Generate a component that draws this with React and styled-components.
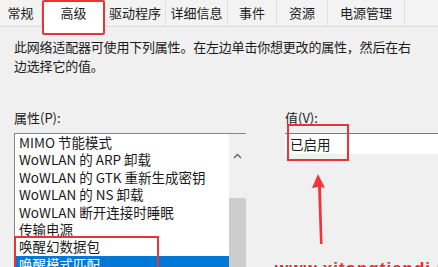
import React from 'react'
import styled, { createGlobalStyle } from 'styled-components'

const Global = createGlobalStyle`
  body {
    margin: 0;
    background: #f0f0f0;
  }
`

const Page = styled.div`
  position: relative;
  width: 438px;
  height: 267px;
  overflow: hidden;
  background: #f0f0f0;
  font-family: "Noto Sans CJK SC", "Noto Sans", sans-serif;
  color: #1a1a1a;
`

const TabBar = styled.div`
  display: flex;
  height: 26px;
  border-bottom: 1px solid #d9d9d9;
  background: #f3f3f3;
`

const Tab = styled.div`
  box-sizing: border-box;
  width: ${p => p.$w}px;
  flex: none;
  display: flex;
  justify-content: center;
  align-items: flex-start;
  padding-top: 4px;
  font-size: 13px;
  line-height: 18px;
  border-right: 1px solid #e2e2e2;
  ${p => p.$active && `
    height: 35px;
    background: #fff;
    border: 2px solid #e8333a;
    border-radius: 2px;
    padding-top: 2px;
    position: relative;
    z-index: 2;
  `}
`

const Intro = styled.p`
  margin: 10px 14px 0;
  width: 402px;
  font-size: 13px;
  line-height: 19px;
  letter-spacing: -0.2px;
`

const Columns = styled.div`
  display: flex;
  margin-top: 33px;
  padding-left: 14px;
`

const LeftCol = styled.div`
  width: 232px;
  flex: none;
`

const RightCol = styled.div`
  position: relative;
  margin-left: 39px;
  flex: 1;
`

const Label = styled.div`
  font-size: 13px;
  line-height: 19px;
  margin-bottom: 6px;
`

const ListBox = styled.div`
  display: flex;
  height: 160px;
  border-top: 1px solid #828790;
  border-left: 1px solid #828790;
  background: #fff;
`

const Items = styled.div`
  flex: 1;
`

const Item = styled.div`
  height: 17.4px;
  line-height: 17.4px;
  padding-left: 4px;
  font-size: 13.5px;
  white-space: nowrap;
  background: ${p => (p.$selected ? '#0078d7' : 'transparent')};
  color: ${p => (p.$selected ? '#fff' : '#1a1a1a')};
`

const Marked = styled.div`
  position: relative;
  &::before {
    content: '';
    position: absolute;
    left: -1px;
    top: -2px;
    width: 141px;
    height: 60px;
    border: 2px solid #e8333a;
    z-index: 2;
    pointer-events: none;
  }
`

const ScrollBar = styled.div`
  width: 17px;
  flex: none;
  display: flex;
  flex-direction: column;
  align-items: center;
  background: #f0f0f0;
`

const ScrollArrow = styled.div`
  height: 64px;
  padding-top: 6px;
  box-sizing: border-box;
`

const Thumb = styled.div`
  width: 17px;
  flex: 1;
  background: #cdcdcd;
`

const ValueBox = styled.div`
  position: relative;
  height: 20px;
  border-top: 1px solid #7a7a7a;
  background: #fff;
  padding-left: 5px;
  font-size: 13.5px;
  line-height: 20px;
  &::before {
    content: '';
    position: absolute;
    left: 2px;
    top: -10px;
    width: 58px;
    height: 33px;
    border: 2px solid #e8333a;
  }
`

const Arrow = styled.svg`
  display: block;
  margin: 20px 0 0 26px;
`

const Watermark = styled.div`
  position: absolute;
  left: 275px;
  top: 260px;
  font-family: "Liberation Sans", sans-serif;
  font-weight: bold;
  font-size: 17px;
  line-height: 17px;
  color: #f2262b;
  letter-spacing: 1px;
`

const tabs = [
  { label: '常规', w: 42 },
  { label: '高级', w: 63, active: true },
  { label: '驱动程序', w: 61 },
  { label: '详细信息', w: 62 },
  { label: '事件', w: 49 },
  { label: '资源', w: 51 },
  { label: '电源管理', w: 77 },
]

const props = [
  'MIMO 节能模式',
  'WoWLAN 的 ARP 卸载',
  'WoWLAN 的 GTK 重新生成密钥',
  'WoWLAN 的 NS 卸载',
  'WoWLAN 断开连接时睡眠',
  '传输电源',
]

export default function App() {
  return (
    <Page>
      <Global />
      <TabBar>
        {tabs.map(t => (
          <Tab key={t.label} $w={t.w} $active={t.active}>{t.label}</Tab>
        ))}
      </TabBar>
      <Intro>此网络适配器可使用下列属性。在左边单击你想更改的属性，然后在右边选择它的值。</Intro>
      <Columns>
        <LeftCol>
          <Label>属性(P):</Label>
          <ListBox>
            <Items>
              {props.map(p => <Item key={p}>{p}</Item>)}
              <Marked>
                <Item>唤醒幻数据包</Item>
                <Item $selected>唤醒模式匹配</Item>
              </Marked>
            </Items>
            <ScrollBar>
              <ScrollArrow>
                <svg width="9" height="6" viewBox="0 0 9 6">
                  <polyline points="1,5 4.5,1.5 8,5" fill="none" stroke="#606060" strokeWidth="1.3" />
                </svg>
              </ScrollArrow>
              <Thumb />
            </ScrollBar>
          </ListBox>
        </LeftCol>
        <RightCol>
          <Label>值(V):</Label>
          <ValueBox>已启用</ValueBox>
          <Arrow width="20" height="72" viewBox="0 0 20 72">
            <polygon points="7,0 14,14 10,13 11.5,70 9,70 7,13 1,14" fill="#f2353a" />
          </Arrow>
        </RightCol>
      </Columns>
      <Watermark>www.xitongtiandi.net</Watermark>
    </Page>
  )
}
